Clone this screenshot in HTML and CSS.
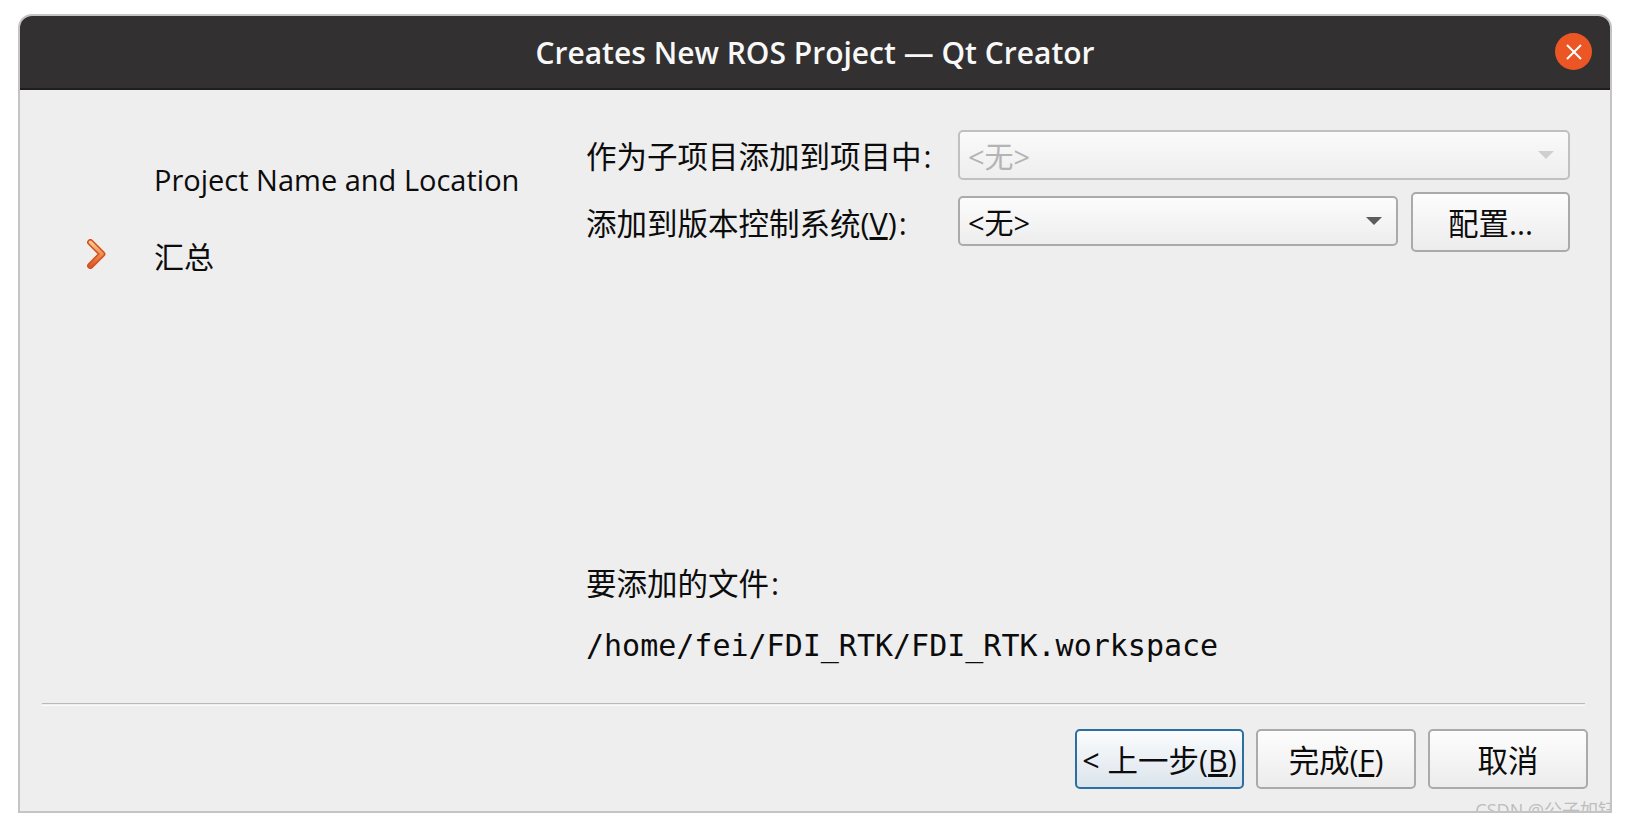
FILE: index.html
```html
<!DOCTYPE html>
<html lang="zh">
<head>
<meta charset="utf-8">
<title>Creates New ROS Project — Qt Creator</title>
<link rel="stylesheet" href="styles.css">
</head>
<body>
<div class="window">
  <header class="titlebar">
    <h1 class="title">Creates New ROS Project — Qt Creator</h1>
    <button class="close" aria-label="close">
      <svg width="16" height="16" viewBox="0 0 16 16"><path d="M1 1 15 15M15 1 1 15" stroke="#fff" stroke-width="2" fill="none"/></svg>
    </button>
  </header>
  <main class="main">
    <nav class="steps">
      <div class="step"><span class="marker"></span><span>Project Name and Location</span></div>
      <div class="step">
        <span class="marker">
          <svg width="22" height="30" viewBox="0 0 22 32">
            <defs><linearGradient id="chev" x1="0" y1="0" x2="0" y2="1"><stop offset="0" stop-color="#f8c88e"/><stop offset=".55" stop-color="#ee8a4c"/><stop offset="1" stop-color="#dc5a26"/></linearGradient></defs>
            <path d="M5 3.5 17.5 16 5 28.5" fill="none" stroke="#d2501f" stroke-width="7" stroke-linecap="round" stroke-linejoin="round"/>
            <path d="M5 3.5 17.5 16 5 28.5" fill="none" stroke="url(#chev)" stroke-width="3.6" stroke-linecap="round" stroke-linejoin="round"/>
          </svg>
        </span>
        <span class="cjk">汇总</span>
      </div>
    </nav>
    <section class="content">
      <div class="form">
        <label class="label">作为子项目添加到项目中<span class="colon">:</span></label>
        <div class="combo combo-disabled"><span>&lt;无&gt;</span><i class="arrow"></i></div>
        <label class="label">添加到版本控制系统(<u>V</u>)<span class="colon">:</span></label>
        <div class="combo-row">
          <div class="combo"><span>&lt;无&gt;</span><i class="arrow"></i></div>
          <button class="btn btn-config">配置...</button>
        </div>
      </div>
      <div class="files">
        <p class="files-label">要添加的文件<span class="colon">:</span></p>
        <p class="files-path">/home/fei/FDI_RTK/FDI_RTK.workspace</p>
      </div>
    </section>
  </main>
  <div class="rule"></div>
  <footer class="actions">
    <button class="btn btn-focus">&lt; 上一步(<u>B</u>)</button>
    <button class="btn btn-finish">完成(<u>F</u>)</button>
    <button class="btn btn-cancel">取消</button>
  </footer>
  <div class="watermark">CSDN @公子如钰</div>
</div>
</body>
</html>
```
FILE: styles.css
```css
* { box-sizing: border-box; }
html, body { margin: 0; height: 100%; background: #fff; }
body {
  padding: 14px 18px 18px 18px;
  font-family: "Open Sans", "Noto Sans CJK SC", sans-serif;
  font-size: 29px;
  color: #0c0c0c;
  overflow: hidden;
}
.window {
  position: relative;
  width: 1594px;
  height: 799px;
  display: flex;
  flex-direction: column;
  background: #eee;
  border: 2px solid #c4c4c4;
  border-radius: 14px 14px 0 0;
  overflow: hidden;
}
.titlebar {
  flex: none;
  height: 74px;
  display: flex;
  align-items: center;
  justify-content: center;
  background: #323031;
  border-bottom: 2px solid #1f1d1e;
  position: relative;
}
.title {
  margin: 0;
  font-size: 30px;
  font-weight: 600;
  color: #f8f8f8;
}
.close {
  position: absolute;
  right: 18px;
  top: 17px;
  width: 37px;
  height: 37px;
  padding: 0;
  border: 0;
  border-radius: 50%;
  background: #eb5624;
  display: flex;
  align-items: center;
  justify-content: center;
}
.main { flex: 1; display: flex; min-height: 0; }
.steps { width: 566px; padding: 51px 0 0 65px; flex: none; }
.step { display: flex; align-items: center; height: 76px; }
.marker { width: 69px; flex: none; display: flex; align-items: center; padding-bottom: 3px; }
.cjk { font-size: 30px; }
.colon { margin-left: 2px; }
.content { flex: 1; display: flex; flex-direction: column; padding: 40px 40px 0 0; }
.form {
  display: grid;
  grid-template-columns: 372px 1fr;
  row-gap: 12px;
  align-items: center;
}
.label { font-size: 30.5px; white-space: nowrap; }
.combo {
  height: 50px;
  flex: 1;
  display: flex;
  align-items: center;
  justify-content: space-between;
  padding: 0 14px 0 8px;
  border: 2px solid #aaa;
  border-radius: 5px;
  background: linear-gradient(#fcfcfc, #ededed);
  font-size: 29px;
}
.combo-disabled { border-color: #c0c0c0; color: #b4b4b4; background: linear-gradient(#fafafa, #eeeeee); }
.arrow { width: 0; height: 0; border: 8px solid transparent; border-top: 8px solid #5c5c5c; border-bottom: 0; }
.combo-disabled .arrow { border-top-color: #cfcfcf; }
.combo-row { display: flex; align-items: flex-start; gap: 13px; }
.combo-row .combo { margin-top: 4px; }
.btn {
  height: 60px;
  padding: 0;
  border: 2px solid #aaa;
  border-radius: 5px;
  background: linear-gradient(#fdfdfd, #ececec);
  font: inherit;
  font-size: 30.5px;
  color: #0c0c0c;
  white-space: nowrap;
}
.btn-config { width: 159px; flex: none; }
.files { margin-top: auto; padding-bottom: 40px; }
.files p { margin: 0; }
.files-label { font-size: 30.5px; height: 68px; }
.files-path { font-family: "DejaVu Sans Mono", monospace; font-size: 30px; }
.rule { flex: none; height: 3px; margin: 0 25px 0 22px; border-top: 1px solid #b9b9b9; border-bottom: 1px solid #fafafa; }
.actions { flex: none; height: 105px; display: flex; justify-content: flex-end; gap: 12px; padding: 23px 22px 0 0; }
.btn-focus {
  width: 169px;
  border-color: #2a6f9f;
  background: linear-gradient(#fbfcfd, #dbe4ec);
}
.btn-finish { width: 160px; }
.btn-cancel { width: 160px; }
.watermark {
  position: absolute;
  right: -6px;
  bottom: -11px;
  font-size: 18px;
  color: #bdbdbd;
  white-space: nowrap;
}
```
